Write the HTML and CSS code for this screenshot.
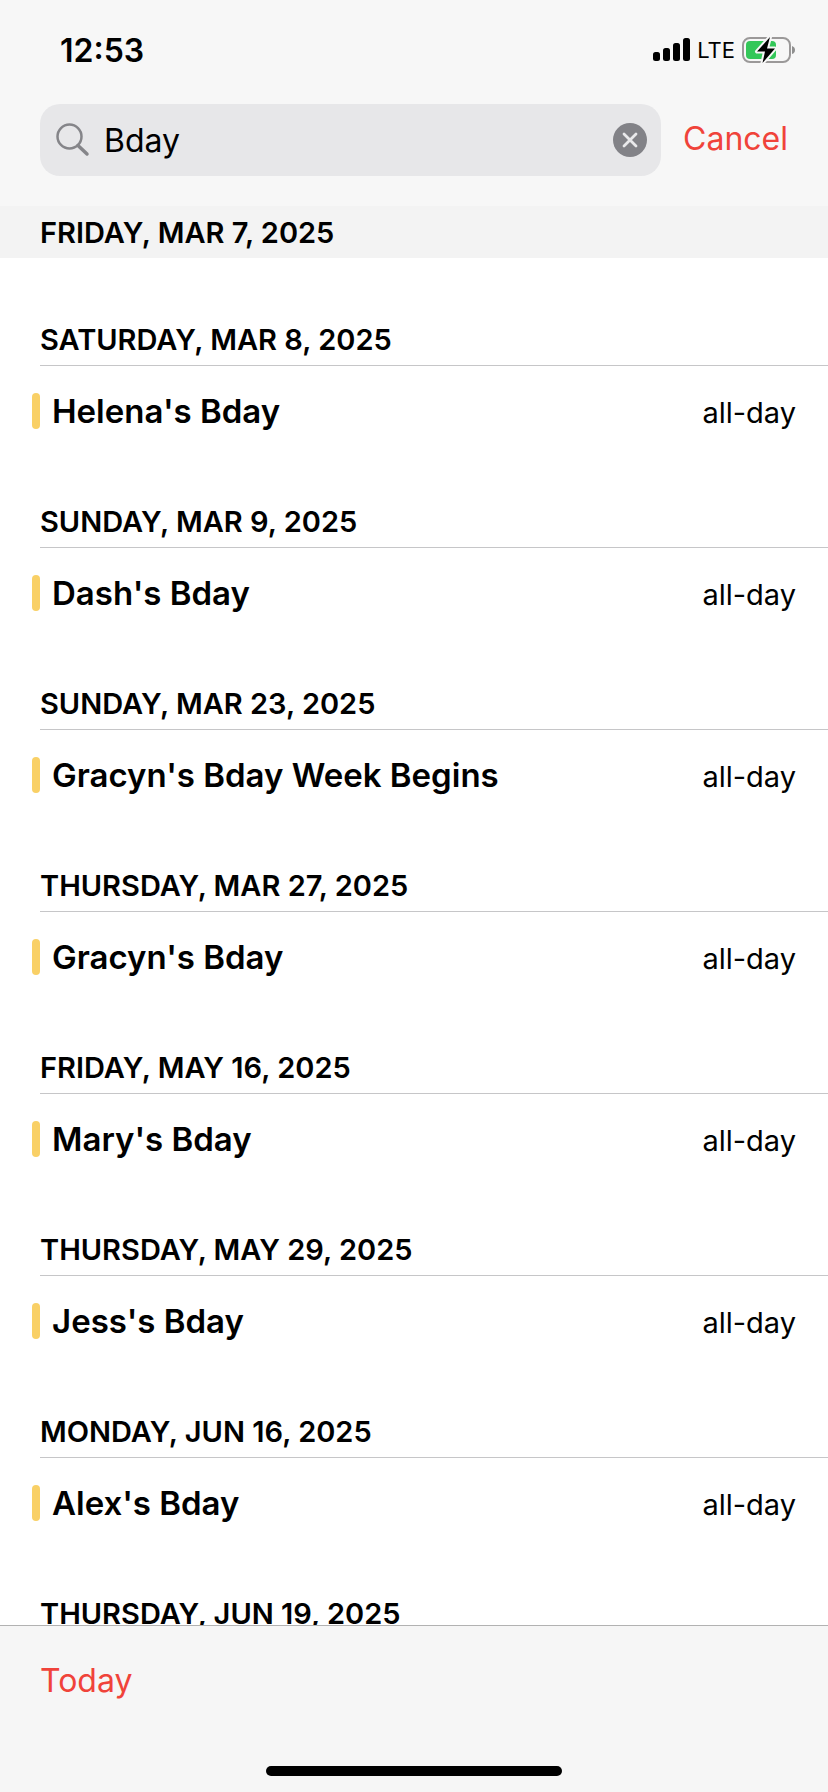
FILE: index.html
```html
<!DOCTYPE html>
<html lang="en">
<head>
<meta charset="utf-8">
<meta name="viewport" content="width=device-width, initial-scale=1">
<title>Calendar search</title>
<link rel="stylesheet" href="styles.css">
</head>
<body>
<div class="app">
  <header class="top">
    <div class="status">
      <time class="clock">12:53</time>
      <div class="indicators">
        <svg class="signal" viewBox="0 0 37 24" aria-hidden="true">
          <rect x="0" y="14" width="7" height="9" rx="2.5"/>
          <rect x="10" y="10" width="7" height="13" rx="2.5"/>
          <rect x="20" y="5" width="7" height="18" rx="2.5"/>
          <rect x="30" y="0" width="7" height="23" rx="2.5"/>
        </svg>
        <span class="network">LTE</span>
        <svg class="battery" viewBox="0 0 54 28" aria-hidden="true">
          <rect x="1" y="2" width="47" height="24" rx="7" fill="none" stroke="#9b9999" stroke-width="2"/>
          <path d="M50 10q3 1 3 4t-3 4z" fill="#8f8f8f"/>
          <rect x="4" y="5" width="30" height="18" rx="4" fill="#34c759"/>
          <path d="M28 1L15 15.500h8L20.500 27 33 12.500h-8z" fill="#000" stroke="#f7f7f7" stroke-width="4" stroke-linejoin="round" paint-order="stroke"/>
        </svg>
      </div>
    </div>
    <form class="search">
      <div class="field">
        <svg class="glass" viewBox="0 0 34 34" aria-hidden="true">
          <circle cx="13.500" cy="13.500" r="12" fill="none" stroke="#858589" stroke-width="2.500"/>
          <path d="M22 22.500l9 8.500" stroke="#858589" stroke-width="3.500" stroke-linecap="round"/>
        </svg>
        <input class="query" type="text" value="Bday" aria-label="Search events">
        <button class="clear" type="button" aria-label="Clear text">
          <svg viewBox="0 0 34 34" aria-hidden="true">
            <circle cx="17" cy="17" r="17" fill="#828287"/>
            <path d="M11 11l12 12M23 11L11 23" stroke="#e9e9eb" stroke-width="2.800" stroke-linecap="round"/>
          </svg>
        </button>
      </div>
      <button class="action" type="button">Cancel</button>
    </form>
    <h2 class="date pinned">Friday, Mar 7, 2025</h2>
  </header>

  <main class="list">
    <section class="day">
      <h2 class="date">Saturday, Mar 8, 2025</h2>
      <div class="event"><span class="mark"></span><span class="title">Helena's Bday</span><span class="when">all-day</span></div>
    </section>
    <section class="day">
      <h2 class="date">Sunday, Mar 9, 2025</h2>
      <div class="event"><span class="mark"></span><span class="title">Dash's Bday</span><span class="when">all-day</span></div>
    </section>
    <section class="day">
      <h2 class="date">Sunday, Mar 23, 2025</h2>
      <div class="event"><span class="mark"></span><span class="title">Gracyn's Bday Week Begins</span><span class="when">all-day</span></div>
    </section>
    <section class="day">
      <h2 class="date">Thursday, Mar 27, 2025</h2>
      <div class="event"><span class="mark"></span><span class="title">Gracyn's Bday</span><span class="when">all-day</span></div>
    </section>
    <section class="day">
      <h2 class="date">Friday, May 16, 2025</h2>
      <div class="event"><span class="mark"></span><span class="title">Mary's Bday</span><span class="when">all-day</span></div>
    </section>
    <section class="day">
      <h2 class="date">Thursday, May 29, 2025</h2>
      <div class="event"><span class="mark"></span><span class="title">Jess's Bday</span><span class="when">all-day</span></div>
    </section>
    <section class="day">
      <h2 class="date">Monday, Jun 16, 2025</h2>
      <div class="event"><span class="mark"></span><span class="title">Alex's Bday</span><span class="when">all-day</span></div>
    </section>
    <section class="day">
      <h2 class="date">Thursday, Jun 19, 2025</h2>
    </section>
  </main>

  <footer class="toolbar">
    <button class="action" type="button">Today</button>
    <div class="home"></div>
  </footer>
</div>
</body>
</html>
```
FILE: styles.css
```css
* {
  box-sizing: border-box;
}

body {
  margin: 0;
  background: #fff;
  color: #000;
  font-family: Inter, "Liberation Sans", sans-serif;
}

button,
input {
  margin: 0;
  padding: 0;
  border: 0;
  background: none;
  color: inherit;
  font: inherit;
}

svg {
  display: block;
}

.app {
  display: flex;
  flex-direction: column;
  height: 100vh;
}

.top {
  background: #f7f7f7;
}

.status {
  display: flex;
  align-items: center;
  justify-content: space-between;
  height: 104px;
  padding: 0 32px 4px 60px;
}

.clock {
  font-size: 32px;
  font-weight: 600;
}

.indicators {
  display: flex;
  align-items: center;
  gap: 7px;
}

.signal {
  width: 37px;
  height: 24px;
}

.network {
  font-size: 22px;
  line-height: 28px;
}

.battery {
  width: 54px;
  height: 28px;
}

.search {
  display: flex;
  align-items: center;
  gap: 22px;
  padding: 0 40px 30px;
}

.field {
  display: flex;
  flex: 1;
  align-items: center;
  gap: 14px;
  min-width: 0;
  height: 72px;
  padding: 0 14px 0 16px;
  border-radius: 20px;
  background: #e7e7e9;
}

.glass,
.clear {
  flex: none;
  width: 34px;
  height: 34px;
}

.query {
  flex: 1;
  min-width: 0;
  outline: 0;
  font-size: 32px;
}

.action {
  padding-bottom: 2px;
  color: #f0433a;
  font-size: 32px;
  line-height: 40px;
}

.date {
  height: 53px;
  margin: 0 0 0 40px;
  border-bottom: 1px solid #c6c6c8;
  font-size: 29px;
  font-weight: 600;
  line-height: 53px;
  text-transform: uppercase;
  white-space: nowrap;
}

.pinned {
  height: 52px;
  margin: 0;
  padding-left: 40px;
  border: 0;
  background: #f3f3f3;
}

.list {
  flex: 1;
  min-height: 0;
  padding-top: 55px;
  overflow: hidden;
}

.day {
  padding-bottom: 39px;
}

.event {
  display: flex;
  align-items: baseline;
  height: 90px;
  padding: 0 32px;
}

.mark {
  align-self: center;
  width: 8px;
  height: 36px;
  margin-right: 12px;
  border-radius: 4px;
  background: #f9d066;
}

.title {
  flex: 1;
  font-size: 33px;
  font-weight: 600;
  line-height: 90px;
}

.when {
  font-size: 29px;
}

.toolbar {
  display: flex;
  flex-direction: column;
  align-items: flex-start;
  justify-content: space-between;
  height: 167px;
  padding: 35px 40px 16px;
  border-top: 1px solid #b2b2b2;
  background: #f6f6f6;
}

.home {
  align-self: center;
  width: 296px;
  height: 10px;
  border-radius: 5px;
  background: #000;
}
```
